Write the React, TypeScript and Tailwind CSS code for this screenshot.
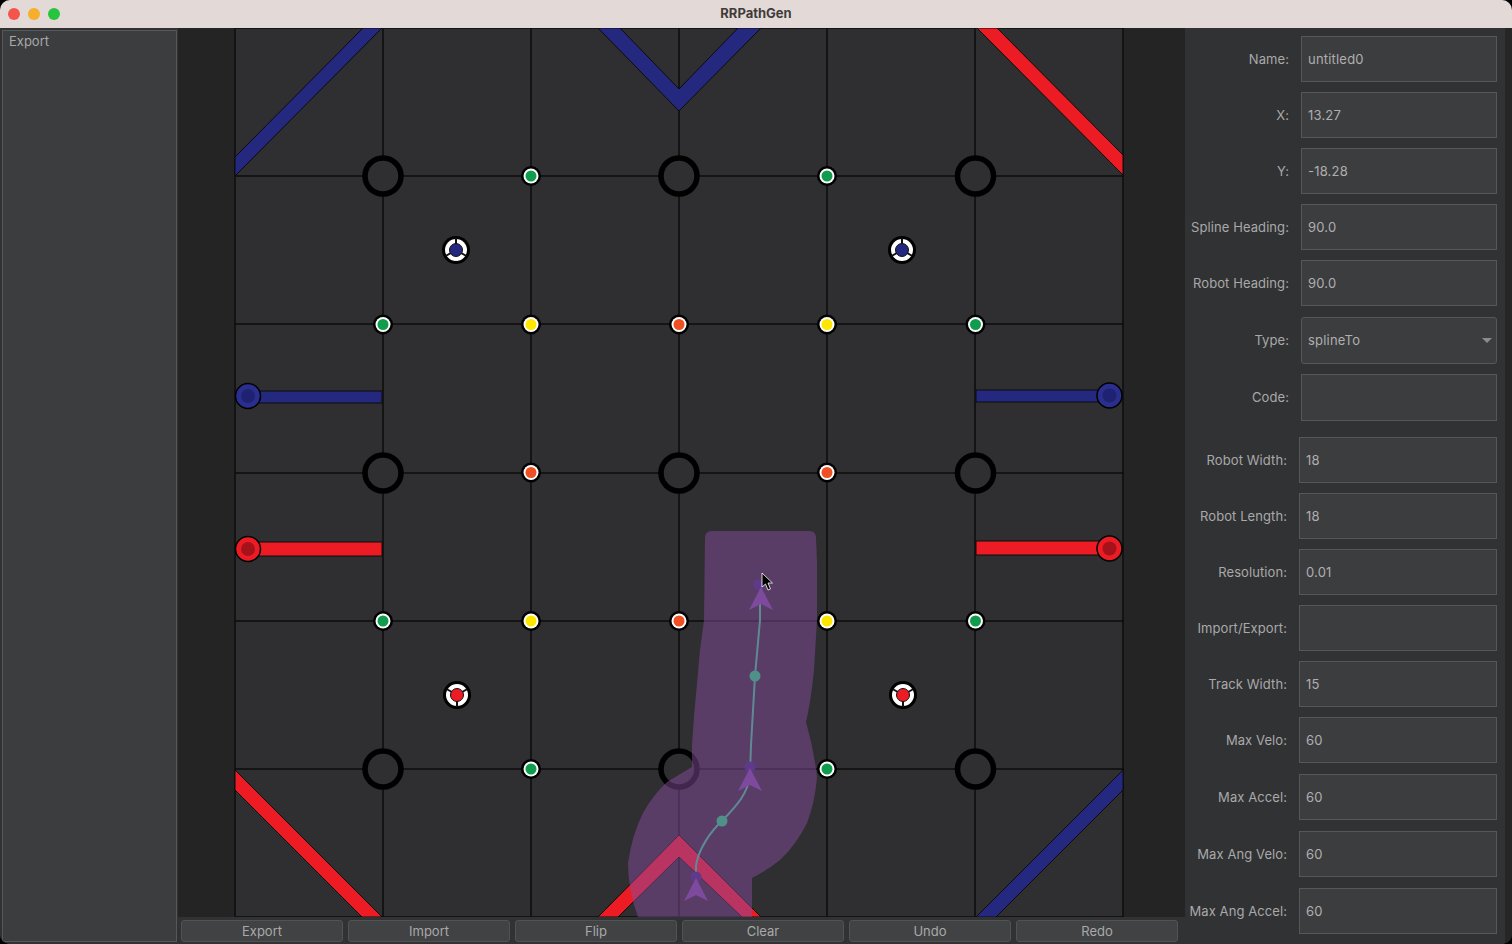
const font = "font-['Inter','Liberation_Sans',sans-serif]"

const GRID_X = [235, 383, 531, 679, 827, 975, 1123]
const GRID_Y = [28, 176, 324, 473, 621, 769, 917]

const GREEN = '#0f9d4d'
const YELLOW = '#ffe600'
const ORANGE = '#f04e23'
const RED = '#ed1c24'
const BLUE = '#25287f'

const junctions = [
  [383, 176], [679, 176], [975.5, 176],
  [383, 473], [679, 473], [975.5, 473],
  [383, 769], [679, 769], [975.5, 769],
]

const poles: [number, number, string][] = [
  [531, 176, GREEN], [827, 176, GREEN],
  [383, 324.5, GREEN], [531, 324.5, YELLOW], [679, 324.5, ORANGE], [827, 324.5, YELLOW], [975.5, 324.5, GREEN],
  [531, 472.5, ORANGE], [827, 472.5, ORANGE],
  [383, 621, GREEN], [531, 621, YELLOW], [679, 621, ORANGE], [827, 621, YELLOW], [975.5, 621, GREEN],
  [531, 769, GREEN], [827, 769, GREEN],
]

const tapes: [string, string][] = [
  ['235,157 363,28 382,28 235,176', BLUE],
  ['598,28 620,28 679,89 738,28 761,28 679,111', BLUE],
  ['977,28 997,28 1123,155 1123,175', RED],
  ['235,770 382,917 362,917 235,790', RED],
  ['1123,770 976,917 996,917 1123,790', BLUE],
  ['598,917 679,835 761,917 742,917 679,857 618,917', RED],
  ['248,391 382,391 382,403 248,403', BLUE],
  ['248,542 382,542 382,556 248,556', RED],
  ['976,390 1109,390 1109,402 976,402', BLUE],
  ['976,541 1109,541 1109,555 976,555', RED],
]

const fields = [
  { label: 'Name:', value: 'untitled0', row: 'h-[46px]', wide: false },
  { label: 'X:', value: '13.27', row: 'h-[46px] mt-[10px]', wide: false },
  { label: 'Y:', value: '-18.28', row: 'h-[46px] mt-[10px]', wide: false },
  { label: 'Spline Heading:', value: '90.0', row: 'h-[46px] mt-[10px]', wide: false },
  { label: 'Robot Heading:', value: '90.0', row: 'h-[46px] mt-[10px]', wide: false },
  { label: 'Type:', value: 'splineTo', row: 'h-[47px] mt-[11px]', wide: false, select: true },
  { label: 'Code:', value: '', row: 'h-[47px] mt-[10px]', wide: false },
  { label: 'Robot Width:', value: '18', row: 'h-[46px] mt-[16px]', wide: true },
  { label: 'Robot Length:', value: '18', row: 'h-[46px] mt-[10px]', wide: true },
  { label: 'Resolution:', value: '0.01', row: 'h-[46px] mt-[10px]', wide: true },
  { label: 'Import/Export:', value: '', row: 'h-[46px] mt-[10px]', wide: true },
  { label: 'Track Width:', value: '15', row: 'h-[46px] mt-[10px]', wide: true },
  { label: 'Max Velo:', value: '60', row: 'h-[46px] mt-[10px]', wide: true },
  { label: 'Max Accel:', value: '60', row: 'h-[46px] mt-[11px]', wide: true },
  { label: 'Max Ang Velo:', value: '60', row: 'h-[46px] mt-[11px]', wide: true },
  { label: 'Max Ang Accel:', value: '60', row: 'h-[46px] mt-[11px]', wide: true },
]

function Beacon({ x, y, color, spokes }: { x: number; y: number; color: string; spokes: number[] }) {
  return (
    <g>
      <circle cx={x} cy={y} r={14} fill="#000" />
      <circle cx={x} cy={y} r={11} fill="#fff" />
      {spokes.map((a) => (
        <line
          key={a}
          x1={x}
          y1={y}
          x2={x + 12 * Math.sin((a * Math.PI) / 180)}
          y2={y - 12 * Math.cos((a * Math.PI) / 180)}
          stroke="#111"
          strokeWidth={2}
        />
      ))}
      <circle cx={x} cy={y} r={6.5} fill={color} stroke="#111" strokeWidth={1} />
    </g>
  )
}

function Cap({ x, y, color, inner }: { x: number; y: number; color: string; inner: string }) {
  return (
    <g>
      <circle cx={x} cy={y} r={12.5} fill={color} stroke="#000" strokeWidth={1.5} />
      <circle cx={x} cy={y} r={7} fill={inner} />
    </g>
  )
}

function Marker({ x, y }: { x: number; y: number }) {
  return (
    <polygon
      points={`${x},${y} ${x + 12},${y + 23} ${x},${y + 17} ${x - 12},${y + 23}`}
      fill="#7d4a9e"
    />
  )
}

function Field() {
  return (
    <svg width={890} height={890} viewBox="234 28 890 890" className="block shrink-0">
      <rect x={234.5} y={28} width={889} height={890} fill="#2f2f31" />
      {GRID_X.map((x) => (
        <line key={x} x1={x} y1={28} x2={x} y2={918} stroke="#0c0c0c" strokeWidth={1.5} />
      ))}
      {GRID_Y.map((y) => (
        <line key={y} x1={235} y1={y} x2={1124} y2={y} stroke="#0c0c0c" strokeWidth={1.5} />
      ))}
      {tapes.map(([points, fill]) => (
        <polygon key={points} points={points} fill={fill} stroke="#0c0c0c" strokeWidth={1} />
      ))}
      {junctions.map(([x, y]) => (
        <circle key={`${x}-${y}`} cx={x} cy={y} r={18} fill="#2f2f31" stroke="#000" strokeWidth={5.5} />
      ))}
      {poles.map(([x, y, color]) => (
        <g key={`${x}-${y}`}>
          <circle cx={x} cy={y} r={10} fill="#000" />
          <circle cx={x} cy={y} r={7.5} fill="#fff" />
          <circle cx={x} cy={y} r={5.5} fill={color} />
        </g>
      ))}
      <Beacon x={456} y={250} color={BLUE} spokes={[0, 120, 240]} />
      <Beacon x={902} y={250} color={BLUE} spokes={[0, 120, 240]} />
      <Beacon x={457} y={695} color={RED} spokes={[180, 300, 60]} />
      <Beacon x={903} y={695} color={RED} spokes={[180, 300, 60]} />
      <Cap x={248} y={396} color="#2a2f8f" inner="#1f2270" />
      <Cap x={1109.5} y={395.5} color="#2a2f8f" inner="#1f2270" />
      <Cap x={248} y={549} color={RED} inner="#a5121a" />
      <Cap x={1109.5} y={548.5} color={RED} inner="#a5121a" />

      {/* robot swept area */}
      <path
        d="M712 531 L809 531 Q816 531 816 538 L817 563 L817 620 L814 670 Q811 700 806 722 Q814 750 817 777 Q815 802 807 823 Q796 845 780 860 Q766 871 752 878 L752 917 L638 917 Q628 890 628 863 Q632 835 643 813 Q653 795 667 782 L692 767 L692 745 L694 717 L700 650 L704 620 L705 538 Q705 531 712 531 Z"
        fill="#854b9b"
        fillOpacity={0.5}
      />
      <path
        d="M696 885 L696 866 C698 850 710 832 722 821 C734 808 748 795 750 775 L751 745 L755 676 L760 620 L760 598"
        fill="none"
        stroke="#5f8a94"
        strokeWidth={2}
      />
      <circle cx={722} cy={821} r={5.5} fill="#4f9089" />
      <circle cx={755} cy={676} r={5.5} fill="#4f9089" />
      <circle cx={696} cy={877} r={5.5} fill="#5f3a8c" />
      <circle cx={750} cy={767} r={5.5} fill="#5f3a8c" />
      <circle cx={759} cy={585} r={5.5} fill="#5f3a8c" />
      <Marker x={696} y={878} />
      <Marker x={750} y={768} />
      <Marker x={761} y={587} />

      {/* mouse pointer */}
      <polygon
        points="762,573 762,587 765.5,584 768,590 770.5,589 768,583 772.5,583"
        fill="#000"
        stroke="#fff"
        strokeWidth={0.8}
      />
    </svg>
  )
}

export default function App() {
  return (
    <div className={`${font} w-[1512px] h-[944px] bg-black overflow-hidden text-[13px] text-[#a9a9a9]`}>
      <div className="w-full h-full flex flex-col rounded-[10px] overflow-hidden bg-[#313234]">
        {/* title bar */}
        <div className="h-[28px] shrink-0 bg-[#e3dad7] relative flex items-center justify-center">
          <div className="absolute left-[8px] top-[8px] flex gap-2">
            <span className="w-3 h-3 rounded-full bg-[#f5544d]" />
            <span className="w-3 h-3 rounded-full bg-[#f7ae2c]" />
            <span className="w-3 h-3 rounded-full bg-[#27c53f]" />
          </div>
          <span className="text-[13px] font-bold text-[#3f3b3a]">RRPathGen</span>
        </div>

        <div className="flex-1 flex min-h-0">
          {/* export panel */}
          <div className="w-[178px] shrink-0 pl-[2px] pr-[1px] pt-[2px] pb-[2px] bg-[#313234]">
            <div className="h-full border border-[#565759] bg-[#3c3d3f] px-[6px] pt-[1px] leading-[18px]">
              Export
            </div>
          </div>

          {/* field and actions */}
          <div className="w-[1007px] shrink-0 flex flex-col bg-[#242424]">
            <div className="pl-[56px] h-[889px] shrink-0 overflow-hidden">
              <Field />
            </div>
            <div className="h-[27px] flex items-start gap-[5px] pl-[3px] pt-[3px] bg-[#313234]">
              {['Export', 'Import', 'Flip', 'Clear', 'Undo', 'Redo'].map((name) => (
                <button
                  key={name}
                  className="w-[162px] h-[22px] rounded-[3px] border border-[#505254] bg-[#414244] text-[#a9a9a9] leading-none"
                >
                  {name}
                </button>
              ))}
            </div>
          </div>

          {/* settings */}
          <div className="w-[320px] shrink-0 bg-[#313234] pt-[8px] pr-[8px] flex flex-col">
            {fields.map((f) => (
              <div key={f.label} className={`flex items-center shrink-0 ${f.row}`}>
                <label
                  className={`mr-[12px] text-right whitespace-nowrap tracking-[0.08px] ${f.wide ? 'w-[102px]' : 'w-[104px]'} ${f.row.startsWith('h-[47px]') ? 'pt-0' : 'pt-[2px]'}`}
                >
                  {f.label}
                </label>
                <div className="relative flex-1 h-full">
                  <input
                    readOnly
                    value={f.value}
                    className={`w-full h-full border border-[#565759] bg-[#3c3d3f] px-[6px] tracking-[0.2px] text-[#afafaf] outline-none ${f.select ? 'rounded-[3px] pb-[2px]' : ''}`}
                  />
                  {f.select && (
                    <svg width={10} height={6} viewBox="0 0 10 6" className="absolute right-[5px] top-[21px]">
                      <polygon points="0,0 10,0 5,5" fill="#8c8c8c" />
                    </svg>
                  )}
                </div>
              </div>
            ))}
          </div>

          <div className="flex-1 bg-[#262626]" />
        </div>
      </div>
    </div>
  )
}
